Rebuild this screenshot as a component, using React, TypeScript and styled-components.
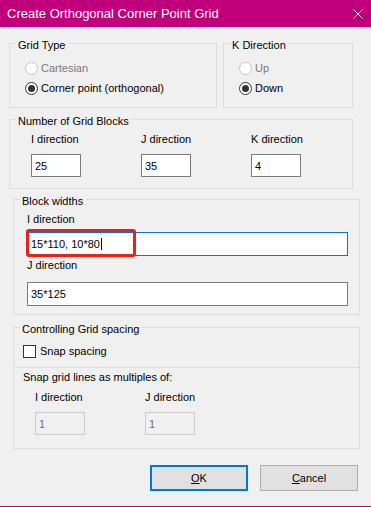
import React from 'react';
import styled, { createGlobalStyle } from 'styled-components';

const GlobalStyle = createGlobalStyle`
  html, body {
    margin: 0;
    padding: 0;
    background: #f0f0f0;
  }
  body {
    font-family: "Liberation Sans", Arial, sans-serif;
    font-size: 11px;
    color: #000;
  }
  * {
    box-sizing: border-box;
  }
`;

const Window = styled.div`
  width: 371px;
  height: 507px;
  display: flex;
  flex-direction: column;
  background: #f0f0f0;
  border-bottom: 1px solid #c4027c;
`;

const TitleBar = styled.div`
  height: 27px;
  flex: none;
  display: flex;
  align-items: center;
  justify-content: space-between;
  padding: 0 8px 0 7px;
  background: #c0007a;
  color: #fff;
  font-size: 13px;
`;

const Body = styled.div`
  display: flex;
  flex-direction: column;
  padding-top: 16px;
`;

const TopRow = styled.div`
  display: flex;
  gap: 6px;
  padding-left: 9px;
`;

const Group = styled.div<{ $width: number; $left?: number; $top?: number }>`
  width: ${p => p.$width}px;
  margin-left: ${p => p.$left ?? 0}px;
  margin-top: ${p => p.$top ?? 0}px;
  border: 1px solid #dcdcdc;
`;

const Legend = styled.div`
  width: fit-content;
  margin: -5px 0 0 6px;
  padding: 0 3px 0 2px;
  background: #f0f0f0;
  line-height: 13px;
`;

const RadioList = styled.div`
  display: flex;
  flex-direction: column;
  padding: 6px 0 9px 15px;
`;

const RadioRow = styled.div<{ $disabled?: boolean }>`
  height: 20px;
  display: flex;
  align-items: center;
  gap: 3px;
  color: ${p => (p.$disabled ? '#7a7a7a' : '#000')};
`;

const RadioCircle = styled.span<{ $checked?: boolean; $disabled?: boolean }>`
  width: 13px;
  height: 13px;
  flex: none;
  border-radius: 50%;
  border: 1px solid ${p => (p.$disabled ? '#c4c4c4' : '#333')};
  background: #fff;
  display: flex;
  align-items: center;
  justify-content: center;
  &::after {
    content: '';
    width: 7px;
    height: 7px;
    border-radius: 50%;
    background: #333;
    display: ${p => (p.$checked ? 'block' : 'none')};
  }
`;

const FieldGrid = styled.div<{ $pad: string }>`
  display: grid;
  grid-template-columns: repeat(3, 110px);
  padding: ${p => p.$pad};
`;

const Field = styled.div`
  display: flex;
  flex-direction: column;
  gap: 8px;
`;

const Label = styled.div<{ $top?: number }>`
  margin-top: ${p => p.$top ?? 0}px;
  line-height: 13px;
  white-space: nowrap;
`;

const TextBox = styled.div<{
  $width: number;
  $height?: number;
  $top?: number;
  $focused?: boolean;
  $disabled?: boolean;
}>`
  width: ${p => p.$width}px;
  height: ${p => p.$height ?? 23}px;
  margin-top: ${p => p.$top ?? 0}px;
  display: flex;
  align-items: center;
  padding-left: 3px;
  border: 1px solid ${p => (p.$focused ? '#0078d7' : p.$disabled ? '#cccccc' : '#7a7a7a')};
  background: ${p => (p.$disabled ? '#f0f0f0' : '#fff')};
  color: ${p => (p.$disabled ? '#6d6d6d' : '#000')};
  white-space: nowrap;
`;

const Caret = styled.span`
  display: inline-block;
  width: 1px;
  height: 12px;
  margin-left: 1px;
  background: #000;
`;

const WidthsBody = styled.div`
  display: flex;
  flex-direction: column;
  padding: 5px 0 8px 13px;
`;

const Highlighted = styled.div`
  position: relative;
  width: fit-content;
  margin-top: 6px;
`;

const RedMark = styled.div`
  position: absolute;
  left: -1px;
  top: -3px;
  width: 110px;
  height: 28px;
  border: 3px solid #e5231d;
  border-radius: 3px;
  pointer-events: none;
`;

const CheckRow = styled.div`
  height: 13px;
  display: flex;
  align-items: center;
  gap: 4px;
  margin: 9px 0 9px 9px;
  line-height: 13px;
`;

const CheckBox = styled.span`
  width: 13px;
  height: 13px;
  flex: none;
  border: 1px solid #333;
  background: #fff;
`;

const Separator = styled.div`
  height: 1px;
  background: #dcdcdc;
`;

const SnapBody = styled.div`
  padding: 3px 0 13px 9px;
`;

const ButtonRow = styled.div`
  display: flex;
  justify-content: flex-end;
  gap: 12px;
  margin-top: 16px;
  padding-right: 13px;
`;

const Button = styled.div<{ $default?: boolean }>`
  width: 98px;
  height: 26px;
  display: flex;
  align-items: center;
  justify-content: center;
  background: #e1e1e1;
  border: ${p => (p.$default ? '2px solid #0078d7' : '1px solid #adadad')};
`;

const AccessKey = styled.span`
  text-decoration: underline;
`;

function CloseIcon() {
  return (
    <svg width="10" height="10" viewBox="0 0 10 10">
      <path d="M0.5 0.5 L9.5 9.5 M9.5 0.5 L0.5 9.5" stroke="#fff" strokeWidth="1" />
    </svg>
  );
}

function Radio({ label, checked, disabled }: { label: string; checked?: boolean; disabled?: boolean }) {
  return (
    <RadioRow $disabled={disabled}>
      <RadioCircle $checked={checked} $disabled={disabled} />
      <span>{label}</span>
    </RadioRow>
  );
}

const blocks = [
  { label: 'I direction', value: '25' },
  { label: 'J direction', value: '35' },
  { label: 'K direction', value: '4' },
];

const snapFields = ['I direction', 'J direction'];

export default function App() {
  return (
    <>
      <GlobalStyle />
      <Window>
        <TitleBar>
          <span>Create Orthogonal Corner Point Grid</span>
          <CloseIcon />
        </TitleBar>
        <Body>
          <TopRow>
            <Group $width={208}>
              <Legend>Grid Type</Legend>
              <RadioList>
                <Radio label="Cartesian" disabled />
                <Radio label="Corner point (orthogonal)" checked />
              </RadioList>
            </Group>
            <Group $width={130}>
              <Legend>K Direction</Legend>
              <RadioList>
                <Radio label="Up" disabled />
                <Radio label="Down" checked />
              </RadioList>
            </Group>
          </TopRow>

          <Group $width={344} $left={9} $top={11}>
            <Legend>Number of Grid Blocks</Legend>
            <FieldGrid $pad="5px 0 11px 21px">
              {blocks.map(b => (
                <Field key={b.label}>
                  <Label>{b.label}</Label>
                  <TextBox $width={50}>{b.value}</TextBox>
                </Field>
              ))}
            </FieldGrid>
          </Group>

          <Group $width={347} $left={13} $top={10}>
            <Legend>Block widths</Legend>
            <WidthsBody>
              <Label>I direction</Label>
              <Highlighted>
                <TextBox $width={321} $height={24} $focused>
                  15*110, 10*80<Caret />
                </TextBox>
                <RedMark />
              </Highlighted>
              <Label $top={3}>J direction</Label>
              <TextBox $width={321} $height={24} $top={10}>35*125</TextBox>
            </WidthsBody>
          </Group>

          <Group $width={347} $left={13} $top={12}>
            <Legend>Controlling Grid spacing</Legend>
            <CheckRow>
              <CheckBox />
              <span>Snap spacing</span>
            </CheckRow>
            <Separator />
            <SnapBody>
              <Label>Snap grid lines as multiples of:</Label>
              <FieldGrid $pad="7px 0 0 12px">
                {snapFields.map(f => (
                  <Field key={f}>
                    <Label>{f}</Label>
                    <TextBox $width={50} $disabled>1</TextBox>
                  </Field>
                ))}
              </FieldGrid>
            </SnapBody>
          </Group>

          <ButtonRow>
            <Button $default>
              <span><AccessKey>O</AccessKey>K</span>
            </Button>
            <Button>
              <span><AccessKey>C</AccessKey>ancel</span>
            </Button>
          </ButtonRow>
        </Body>
      </Window>
    </>
  );
}
